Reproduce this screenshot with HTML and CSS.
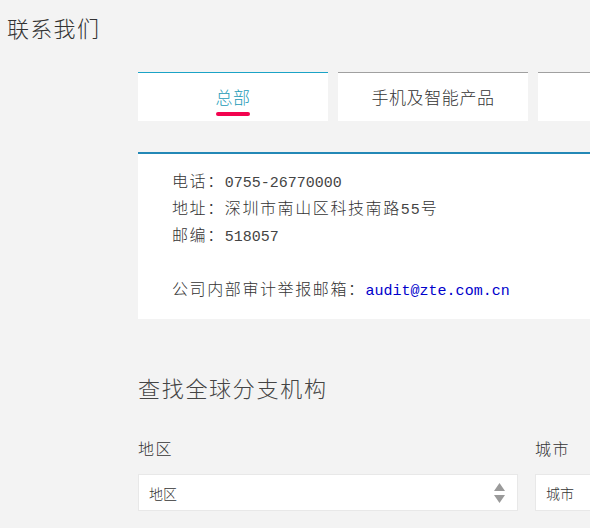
FILE: index.html
```html
<!DOCTYPE html>
<html lang="zh-CN">
<head>
<meta charset="utf-8">
<title>联系我们</title>
<link rel="stylesheet" href="styles.css">
</head>
<body>
<h1 class="page-title">联系我们</h1>
<main class="main">
  <nav class="tabs">
    <div class="tab tab-active"><span class="tab-label">总部</span></div>
    <div class="tab"><span class="tab-label">手机及智能产品</span></div>
    <div class="tab"><span class="tab-label">&nbsp;</span></div>
  </nav>
  <section class="panel">
    <p class="line">电话：<span class="mono">0755-26770000</span></p>
    <p class="line">地址：深圳市南山区科技南路<span class="mono mono-wide">55</span>号</p>
    <p class="line">邮编：<span class="mono">518057</span></p>
    <p class="line">&nbsp;</p>
    <p class="line">公司内部审计举报邮箱：<a class="mono mail" href="#">audit@zte.com.cn</a></p>
  </section>
  <h2 class="section-title">查找全球分支机构</h2>
  <div class="filters">
    <div class="field">
      <div class="field-label">地区</div>
      <div class="select">
        <span class="select-text">地区</span>
        <svg class="arrows" width="11" height="20" viewBox="0 0 11 20"><polygon points="5.5,0 11,8 0,8" fill="#9a9a9a"/><polygon points="0,12 11,12 5.5,20" fill="#9a9a9a"/></svg>
      </div>
    </div>
    <div class="field">
      <div class="field-label">城市</div>
      <div class="select">
        <span class="select-text">城市</span>
        <svg class="arrows" width="11" height="20" viewBox="0 0 11 20"><polygon points="5.5,0 11,8 0,8" fill="#9a9a9a"/><polygon points="0,12 11,12 5.5,20" fill="#9a9a9a"/></svg>
      </div>
    </div>
  </div>
</main>
</body>
</html>
```
FILE: styles.css
```css
html, body {
  margin: 0;
  padding: 0;
  overflow: hidden;
}
body {
  background: #f3f3f3;
  font-family: "Noto Sans CJK SC", "Liberation Sans", sans-serif;
  color: #333;
  width: 590px;
  height: 528px;
}
.page-title {
  margin: 0;
  padding: 12px 0 0 7px;
  font-size: 22px;
  line-height: 30px;
  font-weight: 300;
  letter-spacing: 1.3px;
  color: #333;
}
.main {
  margin: 30px 0 0 138px;
  width: 1000px;
}
.tabs {
  display: flex;
  gap: 10px;
}
.tab {
  box-sizing: border-box;
  width: 190px;
  height: 49px;
  background: #fff;
  border-top: 1px solid #a0a0a0;
  padding-top: 12px;
  display: flex;
  flex-direction: column;
  align-items: center;
}
.tab-label {
  font-size: 17px;
  line-height: 24px;
  font-weight: 300;
  letter-spacing: 0.6px;
  color: #333;
}
.tab-active {
  border-top-color: #1ba3c6;
}
.tab-active .tab-label {
  color: #1b9ab6;
}
.tab-active::after {
  content: "";
  width: 34px;
  height: 4px;
  margin-top: 3px;
  border-radius: 2px;
  background: #f2034f;
}
.panel {
  box-sizing: border-box;
  margin-top: 31px;
  background: #fff;
  border-top: 2px solid #2388b6;
  padding: 13px 34px 17px 34px;
}
.line {
  margin: 0;
  height: 27px;
  font-size: 16px;
  line-height: 27px;
  font-weight: 300;
  letter-spacing: 1.6px;
  color: #333;
}
.mono {
  font-family: "Liberation Mono", monospace;
  font-size: 15px;
  line-height: 15px;
  font-weight: 400;
  letter-spacing: 0;
  color: #444;
}
.mono-wide {
  letter-spacing: 1px;
}
.mail {
  color: #0000cc;
  text-decoration: none;
}
.section-title {
  margin: 52px 0 0 0;
  font-size: 22px;
  line-height: 32px;
  font-weight: 300;
  letter-spacing: 1.7px;
  color: #444;
}
.filters {
  display: grid;
  grid-template-columns: 380px 380px;
  column-gap: 17px;
  margin-top: 33px;
}
.field-label {
  font-size: 16px;
  line-height: 24px;
  font-weight: 300;
  letter-spacing: 1.5px;
  color: #333;
}
.select {
  box-sizing: border-box;
  margin-top: 14px;
  height: 37px;
  background: #fff;
  border: 1px solid #e8e8e8;
  display: flex;
  align-items: center;
  justify-content: space-between;
  padding: 0 12px 0 10px;
}
.select-text {
  font-size: 14px;
  font-weight: 300;
  color: #333;
}
.arrows {
  display: block;
}
```
